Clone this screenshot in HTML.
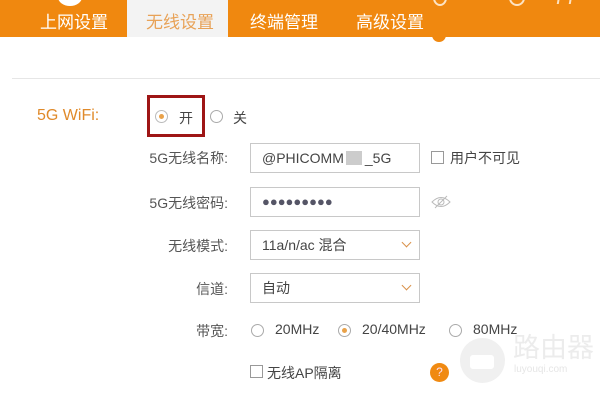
<!DOCTYPE html>
<html><head><meta charset="utf-8"><style>
*{margin:0;padding:0;box-sizing:border-box}
body{width:600px;height:400px;overflow:hidden;background:#fff;position:relative;font-family:"Liberation Sans","Noto Sans CJK SC",sans-serif;color:#444}
.a{position:absolute;white-space:nowrap}
.hd{left:0;top:0;width:600px;height:37px;background:#f0880f}
.tab{top:8px;font-size:17px;color:#fff}
.lab{font-size:14px;color:#555;text-align:right;width:120px;left:108px}
.inp{left:250px;width:170px;height:30px;border:1px solid #c8c8c8;font-size:14px;padding-left:11px;line-height:28px;color:#444}
.rad{width:13px;height:13px;border:1px solid #aaa;border-radius:50%}
.rad.on::after{content:"";position:absolute;left:3px;top:3px;width:5px;height:5px;border-radius:50%;background:#e9a24a}
.chk{width:13px;height:13px;border:1px solid #999;background:#fff}
.arr{width:7px;height:7px;border-right:1px solid #d9914a;border-bottom:1px solid #d9914a;transform:rotate(45deg)}
.t14{font-size:14px;color:#444}
</style></head><body>
<div class="a hd"></div>
<div class="a" style="left:127px;top:0;width:101px;height:37px;background:#f3f3f3"></div>
<div class="a" style="left:58px;top:-12px;width:24px;height:18px;border-radius:50%;background:#fff"></div>
<div class="a" style="left:433px;top:-10px;width:14px;height:16px;border:2px solid #fde3c3;border-radius:0 0 50% 50%"></div>
<div class="a" style="left:509px;top:-10px;width:16px;height:16px;border:2px solid #fde3c3;border-radius:50%"></div>
<div class="a" style="left:558px;top:-10px;width:14px;height:14px;border-left:2px solid #fde3c3;border-right:2px solid #fde3c3;transform:skewX(-10deg)"></div>
<div class="a tab" style="left:40px">上网设置</div>
<div class="a tab" style="left:146px;color:#e8a257">无线设置</div>
<div class="a tab" style="left:250px">终端管理</div>
<div class="a tab" style="left:356px">高级设置</div>
<div class="a" style="left:432px;top:34px;width:14px;height:8px;border-radius:0 0 7px 7px;background:#f0880f"></div>
<div class="a" style="left:12px;top:78px;width:588px;height:1px;background:#e6e6e6"></div>

<div class="a" style="left:37px;top:107px;font-size:16px;color:#e08a2a">5G WiFi:</div>
<div class="a" style="left:147px;top:95px;width:58px;height:42px;border:3px solid #9e1515"></div>
<div class="a rad on" style="left:155px;top:110px;border-color:#bbb"></div>
<div class="a t14" style="left:179px;top:108px">开</div>
<div class="a rad" style="left:210px;top:110px"></div>
<div class="a t14" style="left:233px;top:108px">关</div>

<div class="a lab" style="top:148px">5G无线名称:</div>
<div class="a inp" style="top:143px">@PHICOMM<span style="display:inline-block;width:16px;height:14px;background:#ccc;vertical-align:-2px;margin:0 3px 0 2px"></span>_5G</div>
<div class="a chk" style="left:431px;top:151px"></div>
<div class="a t14" style="left:450px;top:148px">用户不可见</div>

<div class="a lab" style="top:193px">5G无线密码:</div>
<div class="a inp" style="top:187px;font-size:13px;color:#556">●●●●●●●●●</div>
<svg class="a" style="left:431px;top:195px" width="20" height="14" viewBox="0 0 20 14"><path d="M1 7Q10-2 19 7Q10 16 1 7Z" fill="none" stroke="#bbb"/><circle cx="10" cy="7" r="3" fill="none" stroke="#bbb"/><path d="M4 13L16 1" stroke="#bbb"/></svg>

<div class="a lab" style="top:236px">无线模式:</div>
<div class="a inp" style="top:230px">11a/n/ac 混合</div>
<div class="a arr" style="left:403px;top:239px"></div>

<div class="a lab" style="top:279px">信道:</div>
<div class="a inp" style="top:273px">自动</div>
<div class="a arr" style="left:403px;top:282px"></div>

<div class="a lab" style="top:321px">带宽:</div>
<div class="a rad" style="left:251px;top:324px"></div>
<div class="a t14" style="left:275px;top:321px">20MHz</div>
<div class="a rad on" style="left:338px;top:324px"></div>
<div class="a t14" style="left:362px;top:321px">20/40MHz</div>
<div class="a rad" style="left:449px;top:324px"></div>
<div class="a t14" style="left:473px;top:321px">80MHz</div>

<div class="a chk" style="left:250px;top:365px"></div>
<div class="a t14" style="left:267px;top:363px">无线AP隔离</div>
<div class="a" style="left:430px;top:363px;width:19px;height:19px;border-radius:50%;background:#f08a12;color:#fde;font-size:12px;text-align:center;line-height:19px">?</div>

<div class="a" style="left:460px;top:338px;width:45px;height:45px;border-radius:50%;background:rgba(238,238,238,.9)"></div>
<div class="a" style="left:470px;top:355px;width:24px;height:14px;border-radius:3px;background:#fff"></div>
<div class="a" style="left:513px;top:326px;font-size:27px;color:#ececec">路由器</div>
<div class="a" style="left:514px;top:364px;font-size:10px;color:#e6e6e6">luyouqi.com</div>
</body></html>
